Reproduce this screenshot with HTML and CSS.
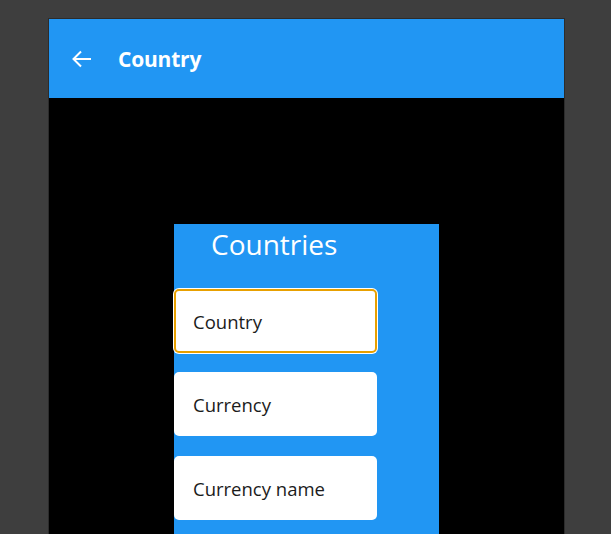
FILE: index.html
```html
<!DOCTYPE html>
<html>
<head>
<meta charset="utf-8">
<link rel="stylesheet" href="styles.css">
</head>
<body>
<div class="window">
  <header class="appbar">
    <svg class="back" width="24" height="24" viewBox="0 0 24 24"><path d="M21 12H4M11 4.5L3.5 12L11 19.5" fill="none" stroke="#fff" stroke-width="2"/></svg>
    <span class="title">Country</span>
  </header>
  <main class="content">
    <section class="panel">
      <h1 class="heading">Countries</h1>
      <div class="field focused">Country</div>
      <div class="field">Currency</div>
      <div class="field">Currency name</div>
    </section>
  </main>
</div>
</body>
</html>
```
FILE: styles.css
```css
html, body {
  margin: 0;
  height: 100%;
  overflow: hidden;
}
body {
  background: #3e3e3e;
  padding: 19px 0 0 49px;
  box-sizing: border-box;
  font-family: "Open Sans", "Noto Sans", sans-serif;
}
.window {
  width: 515px;
  height: 515px;
  outline: 1px solid #2c2c2c;
  background: #000;
  overflow: hidden;
}
.appbar {
  height: 79px;
  background: #2196f3;
  display: flex;
  align-items: center;
  padding-left: 21px;
  box-sizing: border-box;
}
.back {
  display: block;
  margin-right: 24px;
}
.title {
  color: #fff;
  font-weight: 700;
  font-size: 21px;
  letter-spacing: -0.2px;
}
.content {
  padding: 126px 0 0 125px;
}
.panel {
  width: 265px;
  height: 320px;
  background: #2196f3;
  display: flex;
  flex-direction: column;
  align-items: flex-start;
}
.heading {
  margin: 1px 0 0 37px;
  font-weight: 400;
  font-size: 28px;
  line-height: 38px;
  color: #fff;
}
.field {
  width: 203px;
  height: 64px;
  box-sizing: border-box;
  background: #fff;
  border-radius: 5px;
  display: flex;
  align-items: center;
  padding-left: 19px;
  font-size: 18.5px;
  color: #1b1b1b;
  margin-bottom: 20px;
}
.field.focused {
  margin-top: 26px;
  margin-bottom: 19px;
  border: 2px solid #e8a000;
  padding-left: 17px;
  box-shadow: 0 0 0 1px #fff;
}
```
